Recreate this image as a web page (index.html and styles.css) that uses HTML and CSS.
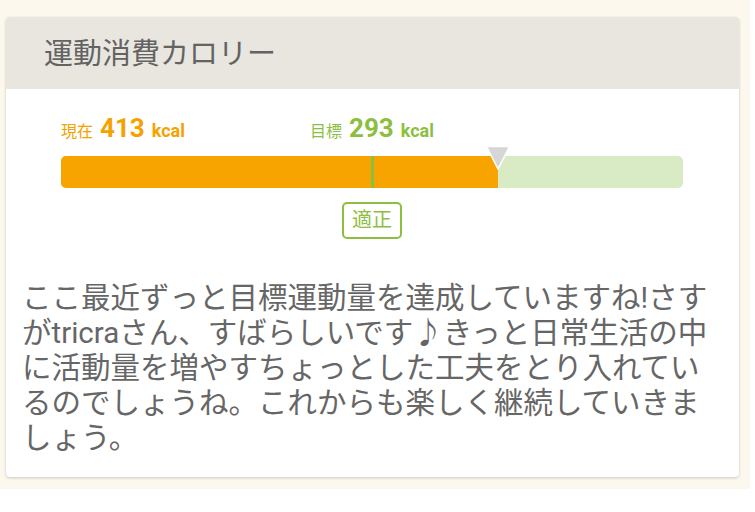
FILE: index.html
```html
<!DOCTYPE html>
<html lang="ja">
<head>
  <meta charset="UTF-8">
  <meta name="viewport" content="width=device-width, initial-scale=1.0">
  <title>運動消費カロリー</title>
  <link rel="stylesheet" href="styles.css">
</head>
<body>

  <div class="screen">
    <div class="card">
      <div class="card-head">運動消費カロリー</div>

      <div class="meter">
        <div class="meter-labels">
          <div class="val val-now">
            <span class="val-name">現在</span><span class="val-num">413</span><span class="val-unit">kcal</span>
          </div>
          <!-- 目標は 50% の位置 (最大 = 目標 x 2) -->
          <div class="val val-goal" style="left: 50%">
            <span class="val-name">目標</span><span class="val-num">293</span><span class="val-unit">kcal</span>
          </div>
        </div>

        <div class="bar">
          <div class="bar-fill" style="width: 70.2%"></div>
          <div class="bar-goal" style="left: 50%"></div>
          <svg class="bar-pointer" style="left: 70.2%" width="26" height="26" viewBox="0 0 26 26">
            <polygon points="1.5,1.5 24.5,1.5 13,24" fill="#d6d6d6" stroke="#fff" stroke-width="1.6" stroke-linejoin="round"/>
          </svg>
        </div>

        <div class="meter-judge">
          <span class="badge" style="left: 50%">適正</span>
        </div>
      </div>

      <p class="comment">ここ最近ずっと目標運動量を達成していますね!さすがtricraさん、すばらしいです♪きっと日常生活の中に活動量を増やすちょっとした工夫をとり入れているのでしょうね。これからも楽しく継続していきましょう。</p>
    </div>
  </div>

</body>
</html>
```

FILE: styles.css
```css
body {
  margin: 0;
  background: #fff;
  font-family: Roboto, "Noto Sans CJK JP", sans-serif;
  color: #666;
}
.screen {
  width: 750px;
  height: 489px;
  padding: 17px 0 0 6px;
  box-sizing: border-box;
  background: #fcf8ee;
}
.card {
  width: 733px;
  height: 460px;
  background: #fff;
  border-radius: 4px;
  box-shadow: 0 1px 3px rgba(0, 0, 0, 0.2);
  overflow: hidden;
}
.card-head {
  height: 72px;
  line-height: 74px;
  padding-left: 38px;
  background: #e8e6df;
  font-size: 29px;
  color: #636363;
}

/* メーター */
.meter {
  padding: 24px 56px 0 55px;
}
.meter-labels {
  position: relative;
  height: 30px;
}
.val {
  display: flex;
  align-items: baseline;
  height: 30px;
  line-height: 30px;
  white-space: nowrap;
}
.val-goal {
  position: absolute;
  top: 0;
  transform: translateX(-50%);
  color: #8cbf3f;
}
.val-now {
  color: #f5a200;
}
.val-name {
  font-size: 16px;
  margin-right: 7px;
}
.val-num {
  font-size: 26px;
  font-weight: bold;
  margin-right: 7px;
}
.val-unit {
  font-size: 18px;
  font-weight: bold;
}

.bar {
  position: relative;
  height: 32px;
  margin-top: 13px;
  background: #d8ebc4;
  border-radius: 5px;
}
.bar-fill {
  height: 100%;
  background: #f7a400;
  border-radius: 5px 0 0 5px;
}
.bar-goal {
  position: absolute;
  top: 0;
  width: 3px;
  height: 100%;
  margin-left: -1.5px;
  background: #8cbf3f;
}
.bar-pointer {
  position: absolute;
  top: -11px;
  margin-left: -13px;
}

.meter-judge {
  position: relative;
  height: 37px;
  margin-top: 14px;
}
.badge {
  position: absolute;
  top: 0;
  transform: translateX(-50%);
  height: 33px;
  line-height: 33px;
  padding: 0 8px;
  border: 2px solid #8cbf3f;
  border-radius: 5px;
  font-size: 20px;
  color: #8cbf3f;
}

.comment {
  margin: 42px 0 0;
  padding: 0 16px;
  font-size: 29.5px;
  line-height: 35px;
  color: #666;
}
```
